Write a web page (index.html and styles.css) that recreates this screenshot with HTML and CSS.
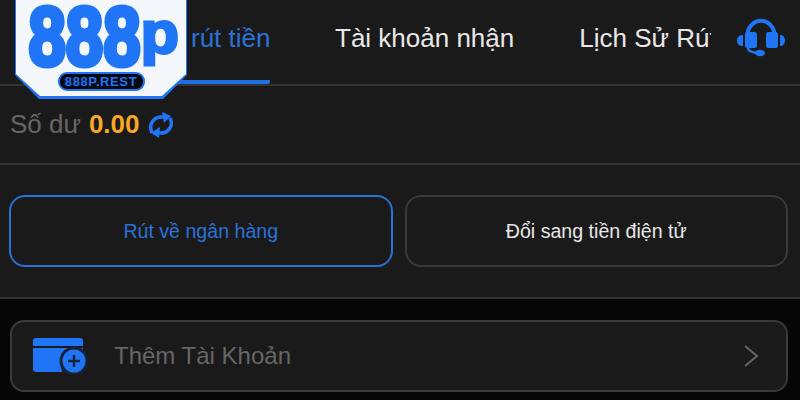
FILE: index.html
```html
<!DOCTYPE html>
<html lang="vi">
<head>
    <meta charset="UTF-8">
    <meta name="viewport" content="width=device-width, initial-scale=1.0">
    <title>Rút tiền</title>
    <link rel="stylesheet" href="styles.css">
</head>

<body>
    <div class="logo">
        <div class="logo-inner">
            <div class="logo-word">888<span class="logo-p">p</span></div>
            <div class="logo-pill">888P.REST</div>
        </div>
    </div>

    <div class="tabs">
        <div class="tab-list">
            <div class="tab active">rút tiền</div>
            <div class="tab">Tài khoản nhận</div>
            <div class="tab clipped">Lịch Sử Rút Tiền</div>
        </div>
        <svg class="headset" viewBox="0 0 48 40" width="48" height="40">
            <path d="M10 20 C10 -3 38 -3 38 20" fill="none" stroke="#1f75f5" stroke-width="4"/>
            <rect x="8" y="14" width="12" height="16" rx="2.5" fill="#1f75f5"/>
            <rect x="29" y="14" width="12" height="16" rx="2.5" fill="#1f75f5"/>
            <path d="M6 17 V28 C2 28 0 26 0 22.500 C0 19 2 17 6 17Z" fill="#1f75f5"/>
            <path d="M43 17 V28 C46 28 48 26 48 22.500 C48 19 46 17 43 17Z" fill="#1f75f5"/>
            <path d="M11 30 C11 33 14 34 20 35" fill="none" stroke="#1f75f5" stroke-width="2.500"/>
            <ellipse cx="23" cy="35" rx="5" ry="3.200" fill="#1f75f5"/>
        </svg>
    </div>

    <div class="balance">
        <span class="balance-label">Số dư</span>
        <span class="balance-value">0.00</span>
        <svg class="refresh" viewBox="0 0 26 26" width="26" height="26">
            <path d="M4 21 C0 12 6 4 15 5" fill="none" stroke="#1f75f5" stroke-width="3.500"/>
            <path d="M14 0 L23 4 L16 11Z" fill="#1f75f5"/>
            <path d="M22 6 C26 14 20 22 11 21" fill="none" stroke="#1f75f5" stroke-width="3.500"/>
            <path d="M12 15 L3 21 L11 26Z" fill="#1f75f5"/>
        </svg>
    </div>

    <div class="methods">
        <div class="method selected">Rút về ngân hàng</div>
        <div class="method">Đổi sang tiền điện tử</div>
    </div>

    <div class="account-wrap">
        <div class="account-row">
            <svg class="wallet" viewBox="0 0 54 36" width="54" height="36">
                <path d="M0 8 V3 C0 1 1 0 3 0 H47 C49 0 50 1 50 3 V8Z" fill="#1f75f5"/>
                <path d="M0 10 H50 V17 A15 15 0 0 0 29 34 H3 C1 34 0 33 0 31Z" fill="#1f75f5"/>
                <circle cx="41" cy="23" r="13" fill="#1f75f5" stroke="#14233a" stroke-width="3"/>
                <path d="M41 17 V29 M35 23 H47" stroke="#14233a" stroke-width="2.500"/>
            </svg>
            <span class="account-label">Thêm Tài Khoản</span>
            <svg class="chevron" viewBox="0 0 16 22" width="16" height="22">
                <path d="M2 1 L14 11 L2 21" fill="none" stroke="#666" stroke-width="2"/>
            </svg>
        </div>
    </div>
</body>

</html>
```

FILE: styles.css
```css
/* General styles */
body {
    font-family: "Liberation Sans", Arial, sans-serif;
    margin: 0;
    width: 800px;
    height: 400px;
    overflow: hidden;
    position: relative;
    background-color: #060606;
    color: #e8e8e8;
}

/* Logo lies over the tabs */
.logo {
    position: absolute;
    top: 0;
    left: 15px;
    width: 172px;
    height: 99px;
    z-index: 2;
    background-color: #1f75f5;
    clip-path: polygon(0 0, 100% 0, 100% 75px, 148px 100%, 24px 100%, 0 75px);
}

.logo-inner {
    height: 96px;
    margin: 0 1px;
    background-color: #f4f8fc;
    clip-path: polygon(0 0, 100% 0, 100% 74px, 146px 100%, 24px 100%, 0 74px);
    display: flex;
    flex-direction: column;
    align-items: center;
}

.logo-word {
    font-weight: 700;
    font-size: 84px;
    line-height: 73px;
    height: 72px;
    margin-left: 10px;
    white-space: nowrap;
    color: #1f75f5;
    -webkit-text-stroke: 5px #1f75f5;
    transform: scaleX(0.8);
}

.logo-p {
    display: inline-block;
    font-size: 60px;
    line-height: 0;
    margin: 0 11px 0 6px;
    vertical-align: 12px;
    -webkit-text-stroke: 3px #1f75f5;
    transform: scaleX(1.3);
}

.logo-pill {
    width: 83px;
    height: 15px;
    line-height: 15px;
    border: 2px solid #1f75f5;
    border-radius: 9px;
    background-color: #04070d;
    color: #1f75f5;
    font-size: 13px;
    font-weight: 700;
    letter-spacing: 0.6px;
    text-align: center;
}

/* Tabs */
.tabs {
    height: 76px;
    padding: 0 15px 8px 175px;
    display: flex;
    align-items: center;
    background-color: #1a1a1a;
    border-bottom: 2px solid #333;
}

.tab-list {
    display: flex;
    align-items: center;
    gap: 65px;
}

.tab {
    flex: none;
    font-size: 26px;
    white-space: nowrap;
}

.tab.active {
    width: 79px;
    height: 80px;
    line-height: 76px;
    margin-top: 8px;
    padding-left: 16px;
    color: #2a72d8;
    border-bottom: 4px solid #1f6fe0;
    border-radius: 0 0 2px 2px;
}

.tab.clipped {
    width: 132px;
    overflow: hidden;
}

.headset {
    flex: none;
    margin-left: auto;
}

/* Balance */
.balance {
    height: 77px;
    padding-left: 10px;
    display: flex;
    align-items: center;
    background-color: #1a1a1a;
    border-bottom: 2px solid #333;
}

.balance-label {
    font-size: 26px;
    color: #666;
    margin-right: 8px;
}

.balance-value {
    font-size: 26px;
    font-weight: 700;
    color: #f9a825;
    margin-right: 8px;
}

/* Withdraw methods */
.methods {
    height: 72px;
    padding: 30px 12px 30px 9px;
    display: flex;
    gap: 12px;
    background-color: #1a1a1a;
    border-bottom: 2px solid #333;
}

.method {
    flex: 1;
    display: flex;
    align-items: center;
    justify-content: center;
    font-size: 19.6px;
    border: 2px solid #3a3a3a;
    border-radius: 16px;
}

.method.selected {
    color: #2a72d8;
    border-color: #2a72d8;
}

/* Add account */
.account-wrap {
    padding: 21px 12px 0 10px;
}

.account-row {
    height: 68px;
    display: flex;
    align-items: center;
    padding: 0 27px 0 21px;
    background-color: #1a1a1a;
    border: 2px solid #3a3a3a;
    border-radius: 14px;
}

.account-label {
    margin-left: 27px;
    font-size: 24px;
    color: #666;
}

.chevron {
    margin-left: auto;
}
```
